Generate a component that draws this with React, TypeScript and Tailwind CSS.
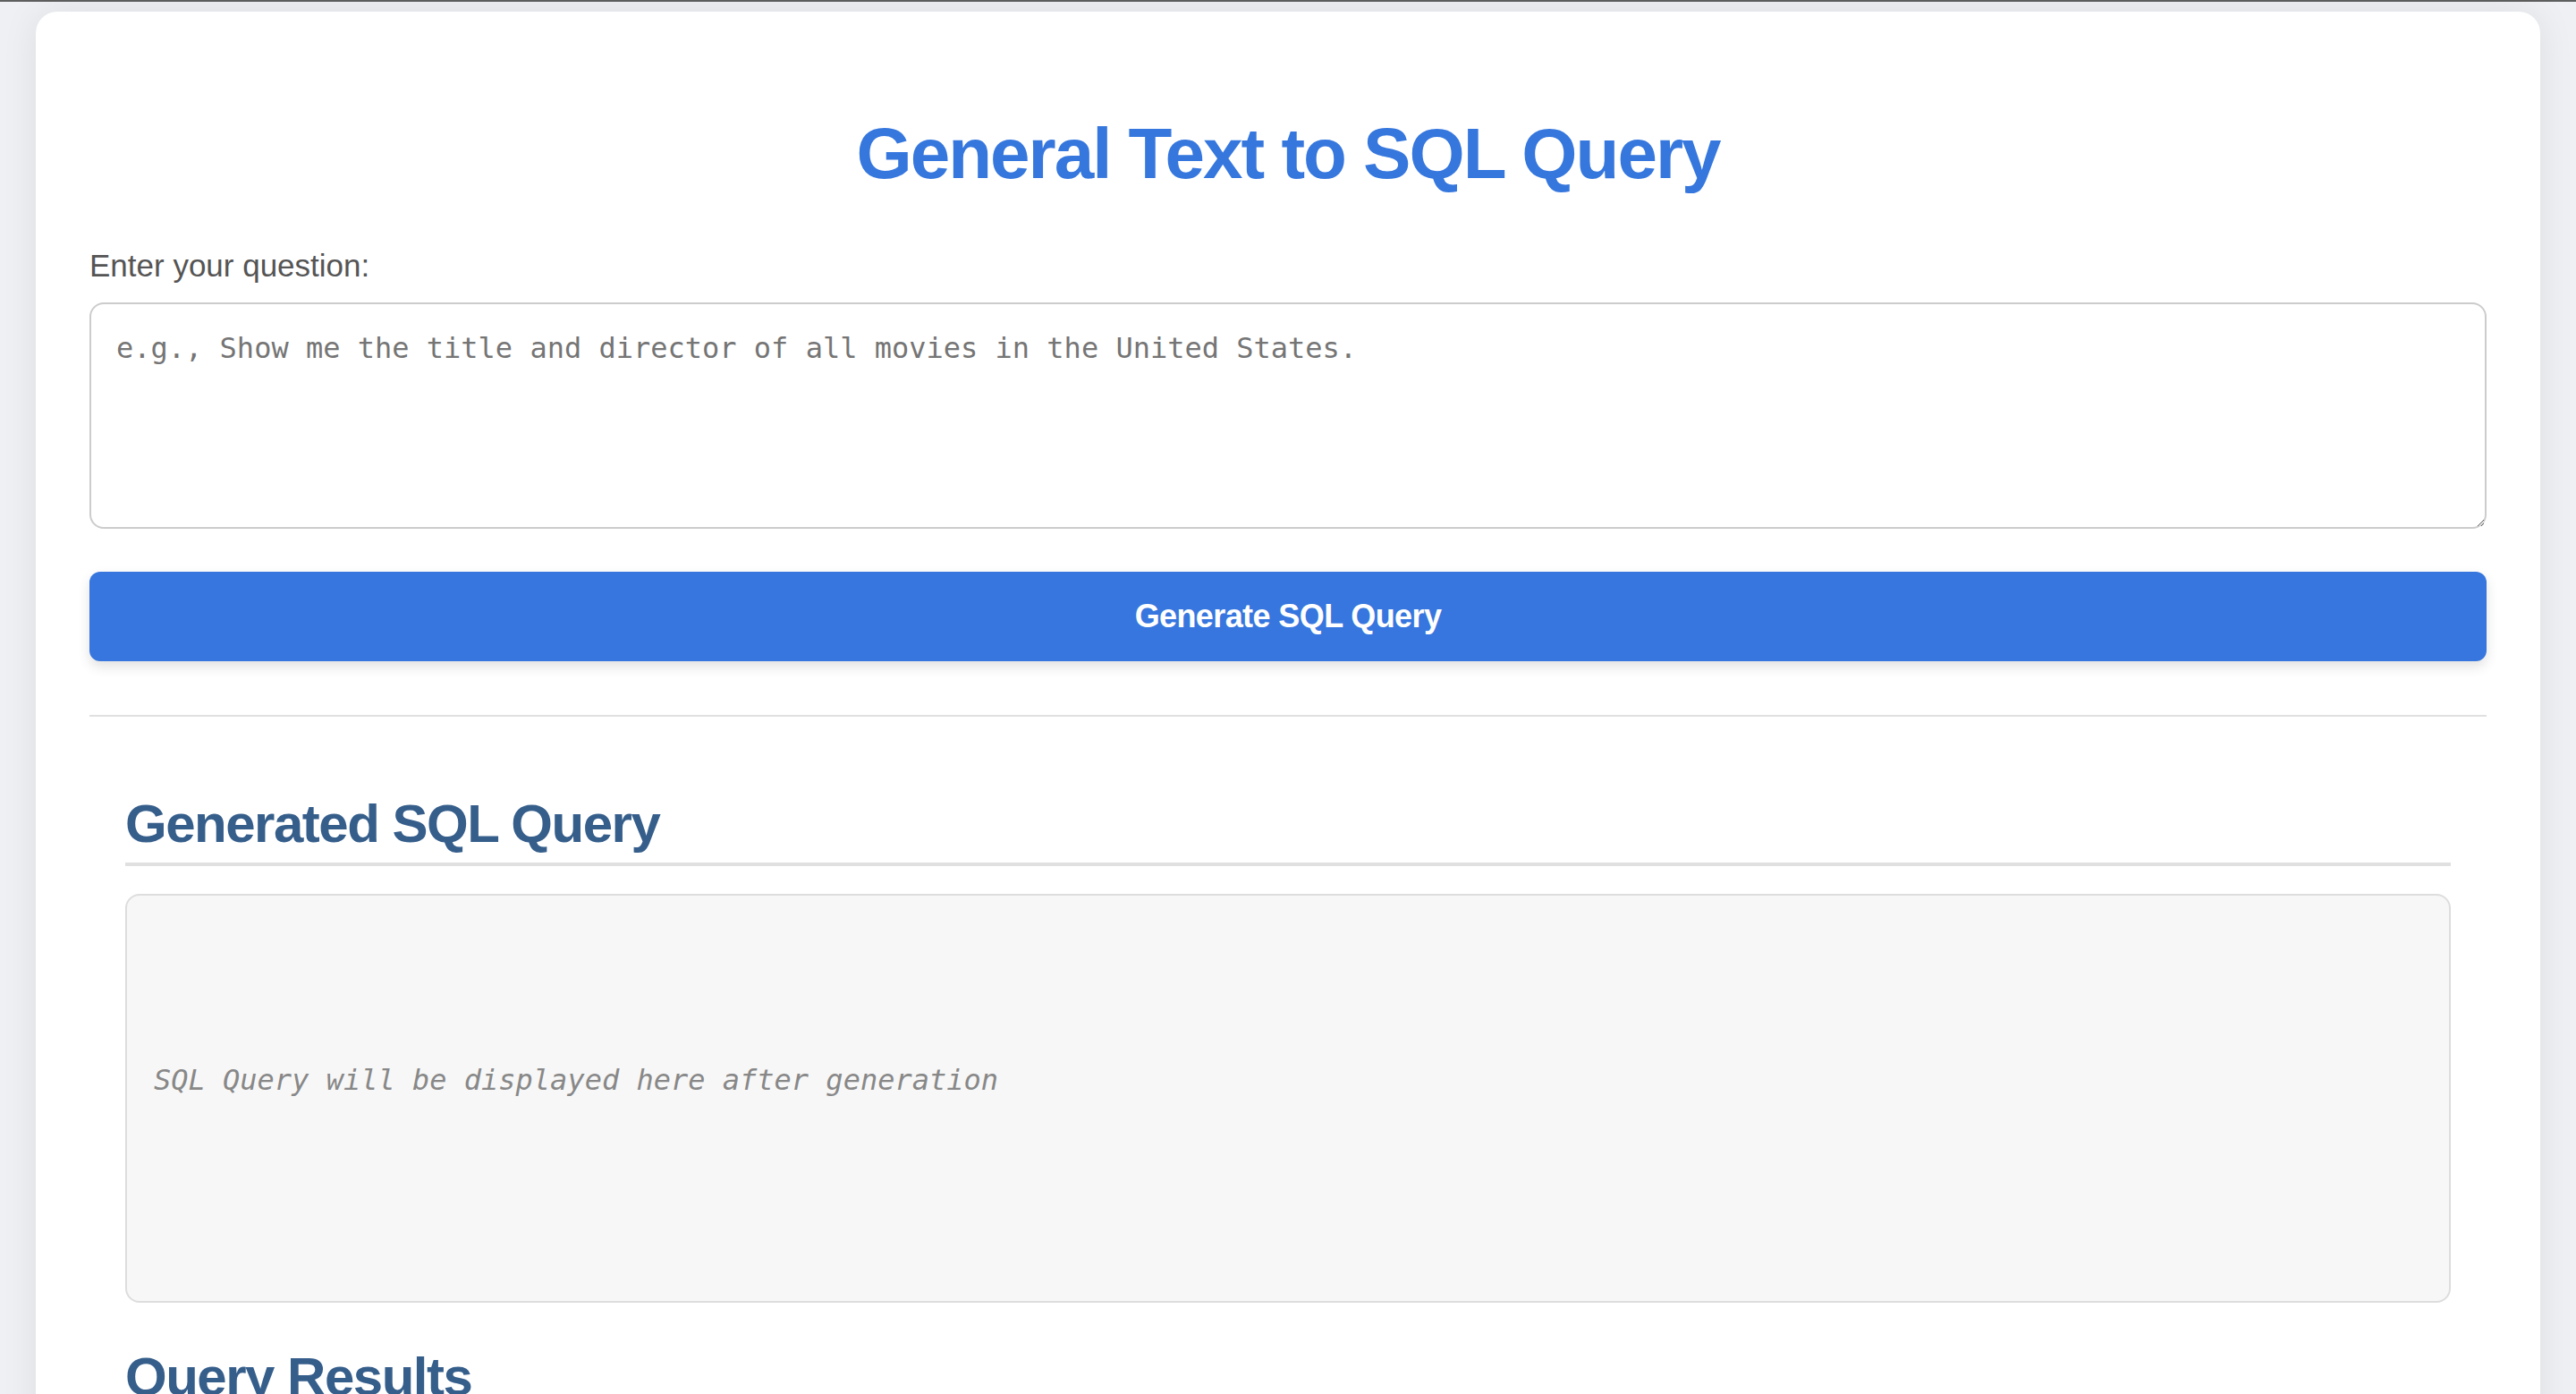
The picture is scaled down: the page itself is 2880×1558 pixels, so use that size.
import { useState } from 'react';

// ============================================================
// Shared styles
// ============================================================

const SANS = "font-['Liberation_Sans',Arial,Helvetica,sans-serif]";
const MONO = "font-['DejaVu_Sans_Mono','Liberation_Mono',monospace]";

interface SectionHeadingProps {
  children: React.ReactNode;
  className?: string;
}

function SectionHeading({ children, className = '' }: SectionHeadingProps) {
  return (
    <h2
      className={`${SANS} ${className} border-b-[4px] border-[#e0e0e0] pb-[7px] text-[60px] font-bold leading-[72px] tracking-[-1.5px] text-[#365e8b]`}
    >
      {children}
    </h2>
  );
}

// ============================================================
// Main
// ============================================================

export default function App() {
  const [question, setQuestion] = useState('');
  const [sql] = useState<string | null>(null);

  return (
    <div className={`${SANS} h-[1558px] overflow-hidden bg-[#eef0f4]`}>
      {/* window edge */}
      <div className="h-[2px] bg-[#5f5f5f]" />

      <div className="mx-[40px] mt-[11px] min-h-[1700px] rounded-[24px] bg-white px-[60px] pt-[111px] shadow-[0_0_40px_rgba(0,0,0,0.08)]">
        <h1 className="text-center text-[80px] font-bold leading-[96px] tracking-[-2px] text-[#3677de]">
          General Text to SQL Query
        </h1>

        <label htmlFor="question" className="mt-[56px] block text-[35px] leading-[42px] text-[#555555]">
          Enter your question:
        </label>
        <textarea
          id="question"
          value={question}
          onChange={(e) => setQuestion(e.target.value)}
          placeholder="e.g., Show me the title and director of all movies in the United States."
          className={`${MONO} mt-[20px] block h-[253px] w-full rounded-[16px] border-[2px] border-[#cccccc] px-[28px] pt-[30px] text-[32px] leading-[38px] text-[#333] outline-none placeholder:text-[#757575]`}
        />

        <button
          type="button"
          className="mt-[48px] flex h-[100px] w-full items-center justify-center rounded-[12px] bg-[#3676de] text-[36px] font-bold tracking-[-0.6px] text-white shadow-[0_6px_14px_rgba(0,0,0,0.12)]"
        >
          Generate SQL Query
        </button>

        <div className="mt-[60px] h-[2px] bg-[#e0e0e0]" />

        <div className="px-[40px]">
          <SectionHeading className="mt-[84px]">Generated SQL Query</SectionHeading>
          <div className="mt-[31px] flex h-[457px] items-center rounded-[16px] border-[2px] border-[#dddddd] bg-[#f7f7f7] px-[30px] pb-[42px]">
            {sql ? (
              <pre className={`${MONO} text-[32px] text-[#333]`}>{sql}</pre>
            ) : (
              <p className={`${MONO} text-[32px] italic leading-[48px] text-[#888888]`}>
                SQL Query will be displayed here after generation
              </p>
            )}
          </div>

          <SectionHeading className="mt-[47px]">Query Results</SectionHeading>
          <div className="mt-[31px] h-[200px] rounded-[16px] border-[2px] border-[#dddddd] bg-[#f7f7f7]" />
        </div>
      </div>
    </div>
  );
}
